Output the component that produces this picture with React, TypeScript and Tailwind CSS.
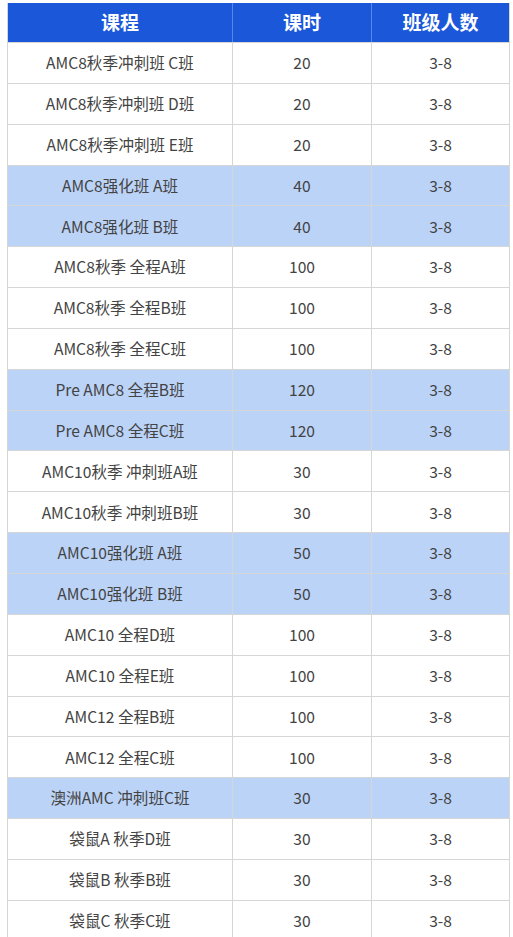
const rows: [string, string, string, boolean][] = [
  ["AMC8秋季冲刺班 C班", "20", "3-8", false],
  ["AMC8秋季冲刺班 D班", "20", "3-8", false],
  ["AMC8秋季冲刺班 E班", "20", "3-8", false],
  ["AMC8强化班 A班", "40", "3-8", true],
  ["AMC8强化班 B班", "40", "3-8", true],
  ["AMC8秋季 全程A班", "100", "3-8", false],
  ["AMC8秋季 全程B班", "100", "3-8", false],
  ["AMC8秋季 全程C班", "100", "3-8", false],
  ["Pre AMC8 全程B班", "120", "3-8", true],
  ["Pre AMC8 全程C班", "120", "3-8", true],
  ["AMC10秋季 冲刺班A班", "30", "3-8", false],
  ["AMC10秋季 冲刺班B班", "30", "3-8", false],
  ["AMC10强化班 A班", "50", "3-8", true],
  ["AMC10强化班 B班", "50", "3-8", true],
  ["AMC10 全程D班", "100", "3-8", false],
  ["AMC10 全程E班", "100", "3-8", false],
  ["AMC12 全程B班", "100", "3-8", false],
  ["AMC12 全程C班", "100", "3-8", false],
  ["澳洲AMC 冲刺班C班", "30", "3-8", true],
  ["袋鼠A 秋季D班", "30", "3-8", false],
  ["袋鼠B 秋季B班", "30", "3-8", false],
  ["袋鼠C 秋季C班", "30", "3-8", false],
];

export default function App() {
  return (
    <div
      className="h-[937px] w-[513px] overflow-hidden bg-white pl-[7px] pt-[3px]"
      style={{ fontFamily: '"Noto Sans CJK SC", "Noto Sans", sans-serif' }}
    >
      <div className="w-[503px] border-l border-r border-[#d6d6d6]">
        {/* header */}
        <div className="grid h-[39px] grid-cols-[225px_139px_1fr] bg-[#1b57d9] text-[19px] font-bold text-white">
          <div className="flex items-center justify-center border-r border-[#5b86e4]">课程</div>
          <div className="flex items-center justify-center border-r border-[#5b86e4]">课时</div>
          <div className="flex items-center justify-center">班级人数</div>
        </div>

        {rows.map(([name, hours, size, hl], i) => (
          <div
            key={i}
            className={
              "grid h-[40.85px] grid-cols-[225px_139px_1fr] border-t border-[#d6d6d6] text-[15.6px] text-[#434343] " +
              (hl ? "bg-[#bcd3f8]" : "bg-white")
            }
          >
            <div className="flex items-center justify-center border-r border-[#d6d6d6]">{name}</div>
            <div className="flex items-center justify-center border-r border-[#d6d6d6]">{hours}</div>
            <div className="flex items-center justify-center">{size}</div>
          </div>
        ))}
      </div>
    </div>
  );
}
